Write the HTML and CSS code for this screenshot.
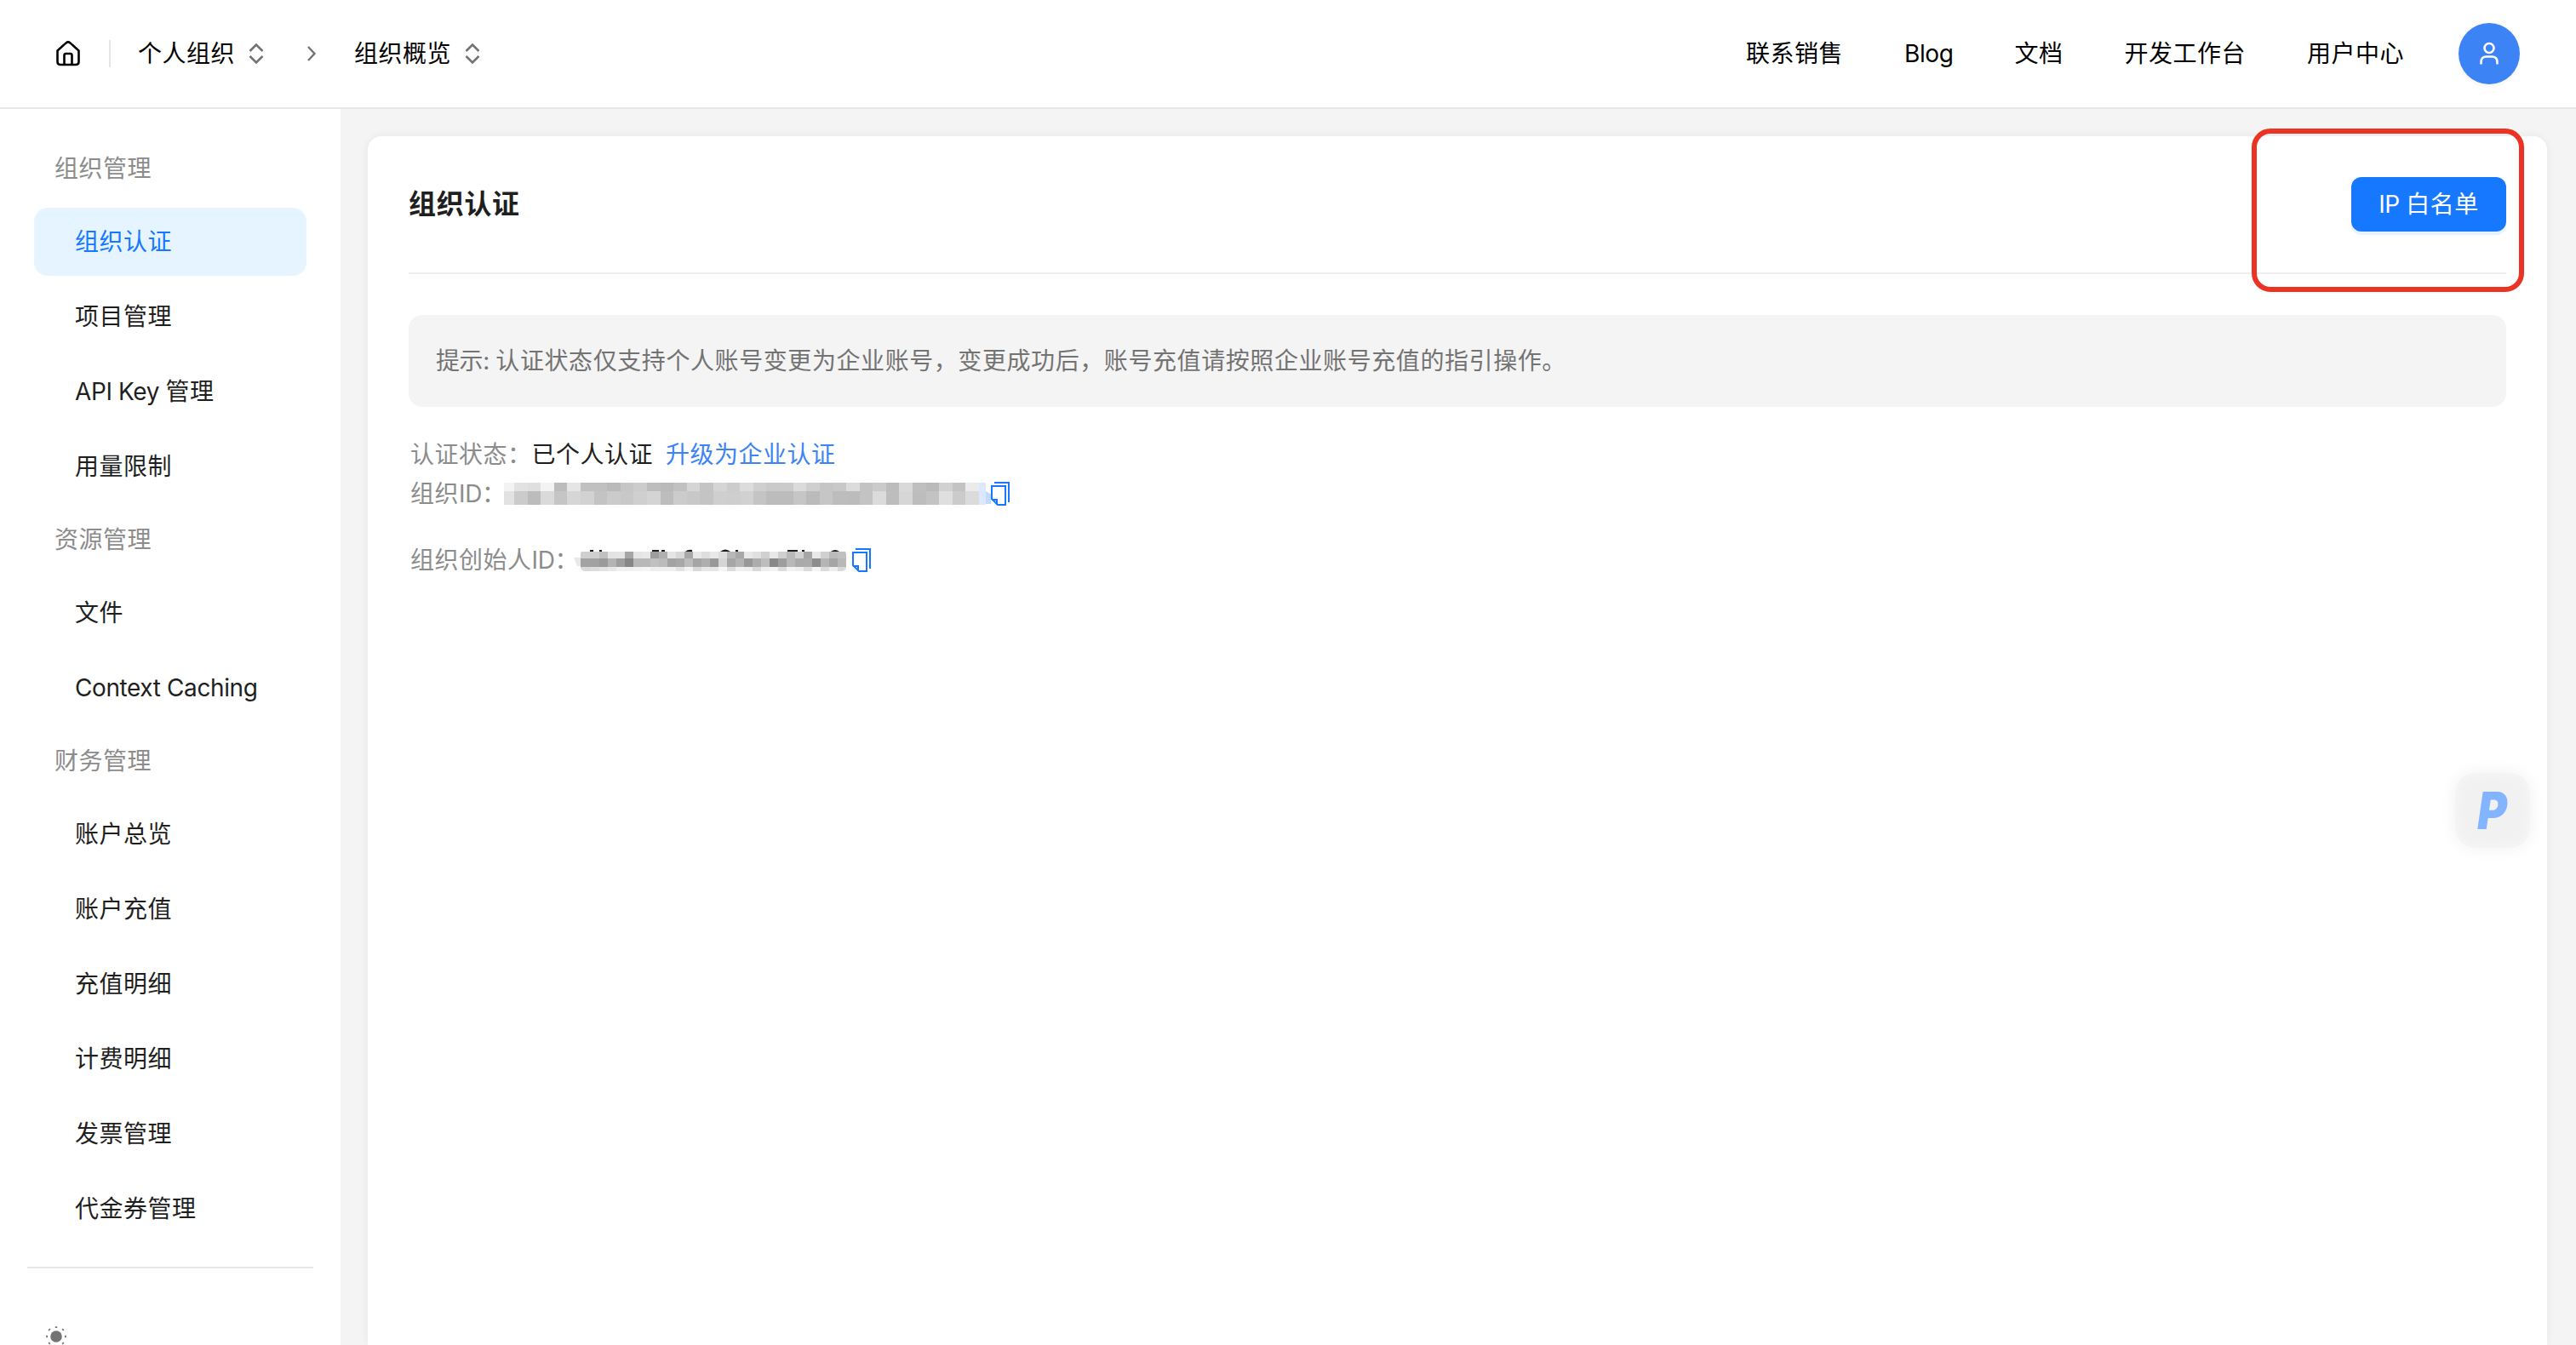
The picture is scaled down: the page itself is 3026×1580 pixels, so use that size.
FILE: index.html
```html
<!doctype html>
<html lang="zh-CN">
<head>
<meta charset="utf-8">
<title>组织认证</title>
	<link rel="stylesheet" href="styles.css">
</head>

<body>
	<div class="header">
		<div class="crumbs">
			<svg class="home" viewBox="0 0 28 30" width="28" height="30"><path d="M1.5 11.5 11.6 2.4Q14 .4 16.4 2.4L26.5 11.5V24.5Q26.5 28 23 28H5Q1.5 28 1.5 24.5ZM9.5 28V17Q9.5 15 11.5 15H16.5Q18.5 15 18.5 17V28"/></svg>
			<i class="line"></i>
			<span>个人组织</span>
			<svg class="updown" viewBox="0 0 18 26" width="18" height="26"><path d="M1.5 10 9 2.5 16.5 10M1.5 16 9 23.5 16.5 16"/></svg>
			<svg class="next" viewBox="0 0 12 18" width="12" height="18"><path d="M2 1 9.5 9 2 17"/></svg>
			<span>组织概览</span>
			<svg class="updown" viewBox="0 0 18 26" width="18" height="26"><path d="M1.5 10 9 2.5 16.5 10M1.5 16 9 23.5 16.5 16"/></svg>
		</div>
		<div class="nav">
			<a>联系销售</a>
			<a class="en">Blog</a>
			<a>文档</a>
			<a>开发工作台</a>
			<a>用户中心</a>
			<div class="avatar">
				<svg viewBox="0 0 24 28" width="24" height="28"><circle cx="12" cy="7.5" r="5.5"/><path d="M2.5 26.5V24Q2.5 17.5 9 17.5H15Q21.5 17.5 21.5 24V26.5"/></svg>
			</div>
		</div>
	</div>
	<div class="page">
		<div class="side">
			<div class="group">组织管理</div>
			<ul>
				<li class="active">组织认证</li>
				<li>项目管理</li>
				<li><span class="en">API Key </span>管理</li>
				<li>用量限制</li>
			</ul>
			<div class="group">资源管理</div>
			<ul>
				<li>文件</li>
				<li class="en">Context Caching</li>
			</ul>
			<div class="group">财务管理</div>
			<ul>
				<li>账户总览</li>
				<li>账户充值</li>
				<li>充值明细</li>
				<li>计费明细</li>
				<li>发票管理</li>
				<li>代金券管理</li>
			</ul>
			<div class="theme">
				<svg viewBox="0 0 26 26" width="26" height="26"><circle cx="13" cy="13" r="6.8"/><path d="M13 1.2V3M13 23V24.8M1.2 13H3M23 13H24.8M4.4 4.4 5.6 5.6M20.4 20.4 21.6 21.6M4.4 21.6 5.6 20.4M20.4 5.6 21.6 4.4"/></svg>
			</div>
		</div>
		<div class="main">
			<div class="card">
				<div class="top">
					<h1>组织认证</h1>
					<button type="button"><span class="en">IP </span>白名单</button>
					<div class="mark"></div>
				</div>
				<div class="tip"><span class="en">提示: </span>认证状态仅支持个人账号变更为企业账号，变更成功后，账号充值请按照企业账号充值的指引操作。</div>
				<div class="row status">
					<span class="label">认证状态：</span><span class="value">已个人认证</span><a>升级为企业认证</a>
				</div>
				<div class="row org">
					<span class="label">组织<span class="en">ID</span>：</span>
					<svg class="mosaic" id="orgid" viewBox="0 0 572 30" width="572" height="30"><path d="M566 12 573 16V27H566Z" fill="#c3daff"/></svg>
					<svg class="copy" viewBox="0 0 22 28" width="22" height="28"><path d="M4 1H21V24M1 5H17V27H8L1 20ZM1 21H7V27"/></svg>
				</div>
				<div class="row owner">
					<span class="label">组织创始人<span class="en">ID</span>：</span>
					<svg class="mosaic" id="ownerid" viewBox="0 0 320 28" width="320" height="28"><path class="ink" d="M19 2h4v3h-4zM30 2h3v3h-3zM92 2h8v3h-8zM103 2h4v3h-4zM131 4q3-3 8-2v3h-8zM172 4q6-5 12 0v2h-12zM190 2h3v4h-3zM251 2h12v3h-12zM268 2h3v4h-3zM302 4q5-4 10 0v2h-10z"/><path d="M0 11h8v10h-4z" fill="#e8e8e8"/><clipPath id="edge"><rect x="8" y="2" width="312" height="25" rx="5"/></clipPath></svg>
					<svg class="copy" viewBox="0 0 22 28" width="22" height="28"><path d="M4 1H21V24M1 5H17V27H8L1 20ZM1 21H7V27"/></svg>
				</div>
			</div>
		</div>
	</div>
	<div class="float"><span>P</span></div>
	<script src="mosaic.js"></script>
</body>
</html>
```
FILE: styles.css
```css
*{
	margin: 0;
	padding: 0;
	box-sizing: border-box;
}
body{
	height: 1580px;
	overflow: hidden;
	display: flex;
	flex-direction: column;
	background-color: #f4f4f4;
	color: #1f1f1f;
	font-family: Inter, "Noto Sans CJK SC", sans-serif;
	font-size: 28px;
	line-height: 40px;
	letter-spacing: 0.5px;
	white-space: nowrap;
}
svg{
	display: block;
	flex: none;
	fill: none;
}
.en{
	letter-spacing: -0.4px;
	white-space: pre;
}
.header{
	flex: none;
	height: 128px;
	padding: 0 66px;
	border-bottom: 2px solid #e5e5e5;
	background-color: #fff;
	color: #000;
	display: flex;
	justify-content: space-between;
	align-items: center;
}
.crumbs, .nav{
	display: flex;
	align-items: center;
}
.home{
	stroke: #000;
	stroke-width: 2.6;
	stroke-linejoin: round;
}
.line{
	width: 2px;
	height: 32px;
	margin: 0 32px 0 34px;
	background-color: #e5e5e5;
}
.updown{
	margin-left: 16px;
	stroke: #737373;
	stroke-width: 2.6;
}
.next{
	margin: 0 44px 0 50px;
	stroke: #737373;
	stroke-width: 2.4;
}
.nav a{
	margin-right: 72px;
}
.nav a:nth-child(5){
	margin-right: 64px;
}
.avatar{
	width: 72px;
	height: 72px;
	border-radius: 50%;
	background-color: #3c83f6;
	box-shadow: 0 2px 4px rgba(0,0,0,0.06);
	display: flex;
	justify-content: center;
	align-items: center;
}
.avatar svg{
	stroke: #fff;
	stroke-width: 2.6;
}
.page{
	flex: 1;
	min-height: 0;
	overflow: hidden;
	display: flex;
}
.side{
	flex: none;
	width: 400px;
	height: 1452px;
	overflow: hidden;
	padding: 24px 32px 0;
	background-color: #fff;
}
.group{
	height: 92px;
	padding-left: 32px;
	line-height: 92px;
	color: #8c8c8c;
}
.side ul{
	margin: 0 8px;
	list-style: none;
	display: grid;
	gap: 8px;
}
.side li{
	height: 80px;
	padding-left: 48px;
	border-radius: 16px;
	line-height: 80px;
}
.side .active{
	background-color: #e6f4ff;
	color: #1677ff;
}
.theme{
	height: 92px;
	overflow: hidden;
	margin-top: 28px;
	padding: 67px 21px 0;
	border-top: 2px solid #e5e5e5;
}
.theme svg{
	fill: #737373;
	stroke: #737373;
	stroke-width: 2.4;
}
.theme circle{
	stroke: none;
}
.main{
	flex: 1;
	padding: 32px 34px 0 32px;
}
.card{
	height: 1420px;
	padding: 0 48px;
	border-radius: 16px 16px 0 0;
	background-color: #fff;
	box-shadow: 0 0 10px rgba(0,0,0,0.06);
}
.top{
	position: relative;
	height: 162px;
	border-bottom: 2px solid #eee;
	display: flex;
	justify-content: space-between;
	align-items: center;
}
h1{
	font-size: 32px;
	font-weight: 700;
	letter-spacing: 0.7px;
}
button{
	width: 182px;
	height: 64px;
	border: 0;
	border-radius: 12px;
	background-color: #1677ff;
	box-shadow: 0 4px 0 rgba(5,145,255,0.1);
	color: #fff;
	font: inherit;
	letter-spacing: 0.5px;
}
.mark{
	position: absolute;
	top: -9px;
	right: -21px;
	width: 320px;
	height: 192px;
	border: 6px solid #ea3323;
	border-radius: 22px;
}
.tip{
	height: 108px;
	margin-top: 48px;
	padding-left: 32px;
	border-radius: 16px;
	background-color: #f4f4f4;
	line-height: 108px;
	letter-spacing: 0.58px;
	color: #737373;
}
.row{
	padding-left: 2px;
	height: 46px;
	display: flex;
	align-items: center;
}
.label{
	color: #8c8c8c;
}
.value{
	margin-right: 15px;
}
.row a{
	color: #3c83f6;
}
.status{
	margin-top: 33px;
}
.owner{
	margin-top: 32px;
}
.org .label{
	width: 110px;
}
.owner .label{
	width: 192px;
}
.copy{
	stroke: #1677ff;
	stroke-width: 2;
}
.owner .copy{
	margin-left: 7px;
}
.ink{
	fill: #1f1f1f;
}
.float{
	position: absolute;
	top: 908px;
	left: 2884px;
	width: 88px;
	height: 88px;
	border-radius: 24px;
	background-color: #f1f1f1;
	box-shadow: 0 0 20px rgba(0,0,0,0.06), inset 0 0 16px #f8f8f8;
	display: flex;
	justify-content: center;
	align-items: center;
	color: #82b4ff;
}
.float span{
	font: italic 900 60px/88px Inter, sans-serif;
	letter-spacing: 0;
	transform: scaleX(0.88);
}
```
FILE: mosaic.js
```js
// masked ids: every two hex digits are the grey of one cell
function mosaic(id, rows, x, first, w, clip){
	var svg = document.getElementById(id);
	rows.forEach(function(row){
		for(var i = 0; i < row[2].length / 2; i++){
			var c = row[2].substr(i * 2, 2);
			var r = document.createElementNS("http://www.w3.org/2000/svg", "rect");
			r.setAttribute("x", i == 0 ? x : x + first + (i - 1) * w);
			r.setAttribute("y", row[0]);
			r.setAttribute("width", i == 0 ? first : w);
			r.setAttribute("height", row[1]);
			r.setAttribute("fill", "#" + c + c + c);
			r.setAttribute("shape-rendering", "crispEdges");
			if(clip){
				r.setAttribute("clip-path", clip);
			}
			svg.appendChild(r);
		}
	});
}
mosaic("orgid", [
	[2, 10, "f3e2dff3bce5c0c0bac6ccbdbac1d5c4d5ccdccfcacbdbcfc5c8dcc3cabcd9bfbad1c3eb"],
	[12, 16, "e2cbbcdac5d6d2c3cbc8cfd4bdccc8c4cfced1c4bcbcc6bbc6bdbcc3dbbdd6bdc3dfcbdb"]
], 0, 12, 15.6);
document.getElementById("orgid").insertAdjacentHTML("beforeend", '<rect x="558" y="2" width="8" height="26" fill="#dbe8ff"/>');
mosaic("ownerid", [
	[4, 8, "cfcfc0e3e5a6e5e89db0e5d8a8e8dee8ddb8a8e8e0d0e8d0b8d0a6e8d0bbc0"],
	[12, 10, "a2a29ab49e86b8b8c0bba3a8bca5ae98d5a6b398acbd889eb8aaab8db5a5b8"],
	[22, 6, "d8dde2e8f0f0f3f5eeeef0e2f3d8e6e6f5dcf0eed8eef3dcf3eedcf5dceed8"]
], 8, 12, 10, "url(#edge)");
```
